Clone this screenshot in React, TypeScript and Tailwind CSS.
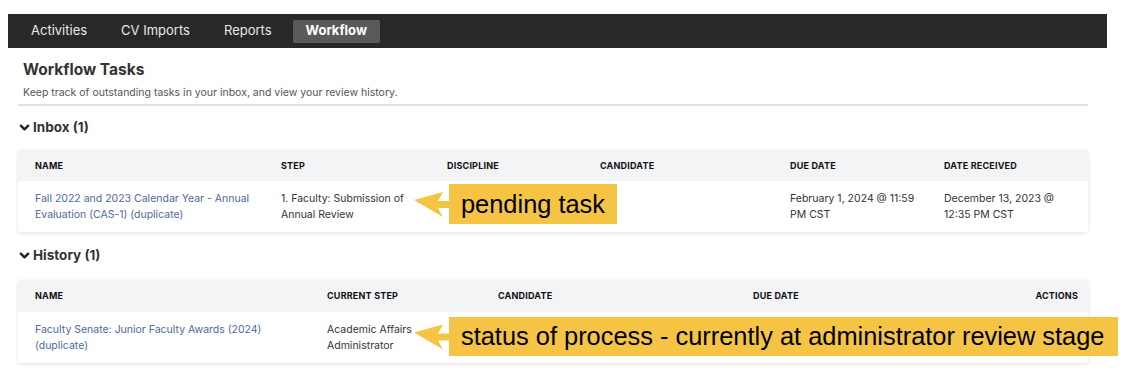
import React from "react";

const font = { fontFamily: "Inter, 'Noto Sans', sans-serif" };

function Chevron() {
  return (
    <svg width="11" height="11" viewBox="0 0 12 12" className="mr-[3px]">
      <path d="M2 4 L6 8 L10 4" fill="none" stroke="#222" strokeWidth="2.6" strokeLinecap="round" strokeLinejoin="round" />
    </svg>
  );
}

function Callout({ top, height, width, text }: { top: number; height: number; width: number; text: string }) {
  return (
    <div className="absolute flex items-center" style={{ left: 413, top }}>
      <svg width="36" height={height} viewBox={`0 0 36 ${height}`} className="shrink-0">
        <polygon
          points={`1,${height / 2 - 4} 30,${height / 2 - 12} 25,${height / 2 - 3} 36,${height / 2 - 3} 36,${height / 2 + 4} 25,${height / 2 + 4} 30,${height / 2 + 13}`}
          fill="#f5c445"
        />
      </svg>
      <div
        className="bg-[#f5c445] flex items-center pl-[12px] text-[25.4px] text-black whitespace-nowrap"
        style={{ height, width, fontFamily: "'Liberation Sans', Arial, sans-serif" }}
      >
        {text}
      </div>
    </div>
  );
}

export default function App() {
  return (
    <div className="relative w-[1122px] h-[381px] bg-white pt-[14px] overflow-hidden" style={font}>
      <nav className="ml-[8px] w-[1099px] h-[34px] bg-[#282828] flex items-center pl-[10px] gap-[8px] text-[13px]">
        <div className="px-[13px] h-[23px] flex items-center text-[#e8e8e8]">Activities</div>
        <div className="px-[13px] h-[23px] flex items-center text-[#e8e8e8]">CV Imports</div>
        <div className="px-[13px] h-[23px] flex items-center text-[#e8e8e8]">Reports</div>
        <div className="px-[13px] h-[23px] flex items-center bg-[#5a5a5a] rounded-[2px] text-white font-bold">Workflow</div>
      </nav>

      <div className="ml-[18px] w-[1070px]">
        <h1 className="mt-[12px] pl-[5px] text-[15.5px] leading-[20px] font-bold text-[#333]">Workflow Tasks</h1>
        <p className="mt-[6px] pl-[5px] text-[10.5px] leading-[14px] text-[#555]">
          Keep track of outstanding tasks in your inbox, and view your review history.
        </p>
        <div className="mt-[4px] h-[2px] bg-[#e2e2e2]" />

        <h2 className="mt-[12px] flex items-center pl-[1px] text-[13.5px] leading-[18px] font-bold text-[#333]">
          <Chevron />
          Inbox (1)
        </h2>

        <div className="mt-[14px] rounded-[3px] bg-white shadow-[0_1px_4px_rgba(0,0,0,0.12)] overflow-hidden">
          <div className="grid grid-cols-[246px_166px_153px_190px_154px_1fr] h-[31px] items-center bg-[#f3f4f6] px-[17px] text-[9px] font-bold text-[#111] tracking-[0.2px]">
            <div>NAME</div>
            <div>STEP</div>
            <div>DISCIPLINE</div>
            <div>CANDIDATE</div>
            <div>DUE DATE</div>
            <div>DATE RECEIVED</div>
          </div>
          <div className="grid grid-cols-[246px_166px_153px_190px_154px_1fr] h-[51px] items-center px-[17px] pr-[8px] text-[10.5px] leading-[16px] text-[#333]">
            <div className="text-[#4d6b9b] pr-[20px]">Fall 2022 and 2023 Calendar Year - Annual Evaluation (CAS-1) (duplicate)</div>
            <div className="pr-[20px]">1. Faculty: Submission of Annual Review</div>
            <div></div>
            <div></div>
            <div className="pr-[12px]">February 1, 2024 @ 11:59 PM CST</div>
            <div className="pr-[10px]">December 13, 2023 @ 12:35 PM CST</div>
          </div>
        </div>

        <h2 className="mt-[14px] flex items-center pl-[1px] text-[13.5px] leading-[18px] font-bold text-[#333]">
          <Chevron />
          History (1)
        </h2>

        <div className="mt-[16px] rounded-[3px] bg-white shadow-[0_1px_4px_rgba(0,0,0,0.12)] overflow-hidden">
          <div className="grid grid-cols-[292px_171px_255px_1fr_auto] h-[32px] items-center bg-[#f3f4f6] px-[17px] pr-[10px] text-[9px] font-bold text-[#111] tracking-[0.2px]">
            <div>NAME</div>
            <div>CURRENT STEP</div>
            <div>CANDIDATE</div>
            <div>DUE DATE</div>
            <div>ACTIONS</div>
          </div>
          <div className="grid grid-cols-[292px_171px_255px_1fr_auto] h-[51px] items-center px-[17px] text-[10.5px] leading-[16px] text-[#333]">
            <div className="text-[#4d6b9b] pr-[30px]">Faculty Senate: Junior Faculty Awards (2024) (duplicate)</div>
            <div className="pr-[40px]">Academic Affairs Administrator</div>
            <div></div>
            <div></div>
            <div></div>
          </div>
        </div>
      </div>

      <Callout top={184} height={40} width={168} text="pending task" />
      <Callout top={317} height={39} width={669} text="status of process - currently at administrator review stage" />
    </div>
  );
}
